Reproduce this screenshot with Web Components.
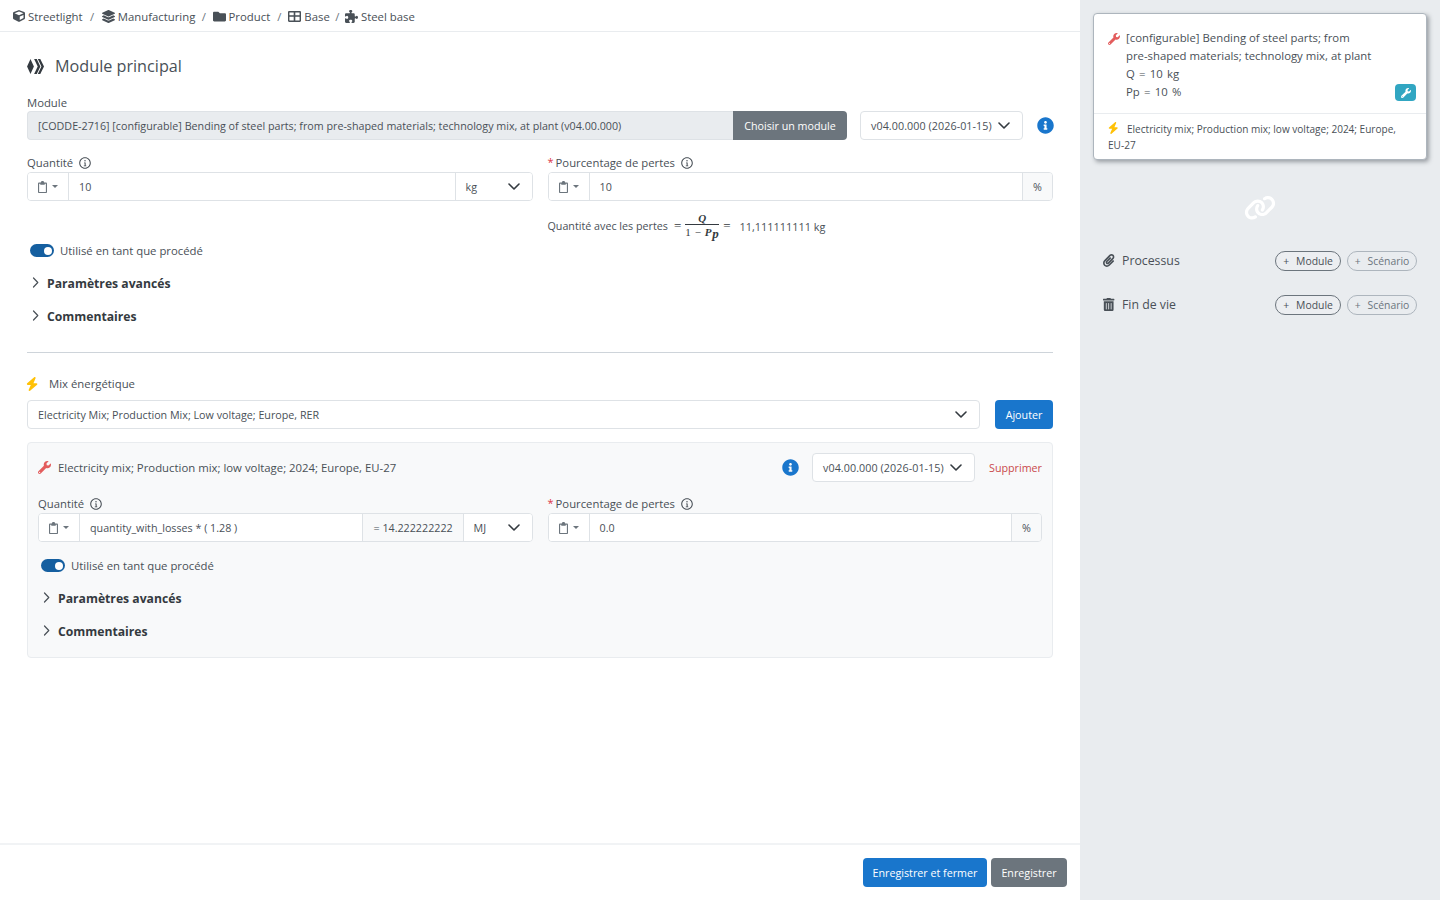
<!DOCTYPE html>
<html lang="fr"><head><meta charset="utf-8"><title>Module principal</title>
<style>
html,body{margin:0;padding:0;height:100%;}
body{font-family:"Open Sans","Noto Sans",sans-serif;font-size:11px;color:#495057;overflow:hidden;background:#fff;}
</style></head><body>
<x-app></x-app>
<script>
const ICONS={
cube:[512,'M239.1 6.3l-208 78c-18.7 7-31.1 25-31.1 45v225.1c0 18.2 10.3 34.8 26.5 42.9l208 104c13.5 6.8 29.4 6.8 42.9 0l208-104c16.3-8.1 26.5-24.8 26.5-42.9V129.3c0-20-12.4-37.9-31.1-44.9l-208-78C262 2.2 250 2.2 239.1 6.3zM256 68.4l192 72v1.1l-192 78-192-78v-1.1l192-72zm32 356V275.5l160-65v133.9l-160 80z'],
layers:[512,'M12.41 148.02l232.94 105.67c6.8 3.09 14.49 3.09 21.29 0l232.94-105.67c16.55-7.51 16.55-32.52 0-40.03L266.65 2.31a25.607 25.607 0 0 0-21.29 0L12.41 107.98c-16.55 7.51-16.55 32.53 0 40.04zm487.18 88.28l-58.09-26.33-161.64 73.27c-7.56 3.43-15.59 5.17-23.86 5.17s-16.29-1.74-23.86-5.17L70.51 209.97l-58.1 26.33c-16.55 7.5-16.55 32.5 0 40l232.94 105.59c6.8 3.08 14.49 3.08 21.29 0L499.59 276.3c16.55-7.5 16.55-32.5 0-40zm0 127.8l-57.87-26.23-161.86 73.37c-7.56 3.43-15.59 5.17-23.86 5.17s-16.29-1.74-23.86-5.17L70.29 337.87 12.41 364.1c-16.55 7.5-16.55 32.5 0 40l232.94 105.59c6.8 3.08 14.49 3.08 21.29 0L499.59 404.1c16.55-7.5 16.55-32.5 0-40z'],
folder:[512,'M464 128H272l-64-64H48C21.49 64 0 85.49 0 112v288c0 26.51 21.49 48 48 48h416c26.51 0 48-21.49 48-48V176c0-26.51-21.49-48-48-48z'],
table:[512,'M48 40h416c26 0 48 22 48 48v336c0 26-22 48-48 48H48c-26 0-48-22-48-48V88c0-26 22-48 48-48zM56 96v112h168V96zm232 0v112h168V96zM56 264v152h168V264zm232 0v152h168V264z'],
puzzle:[512,'M192 104.800c0-9.200-5.800-17.300-13.200-22.800C167.200 73.300 160 61.300 160 48c0-26.500 28.700-48 64-48s64 21.500 64 48c0 13.300-7.200 25.300-18.800 34c-7.400 5.500-13.200 13.600-13.200 22.800c0 12.800 10.400 23.200 23.200 23.200H336c26.500 0 48 21.500 48 48v56.800c0 12.800 10.400 23.200 23.200 23.200c9.200 0 17.300-5.800 22.800-13.200c8.700-11.600 20.700-18.800 34-18.800c26.500 0 48 28.700 48 64s-21.500 64-48 64c-13.300 0-25.300-7.200-34-18.800c-5.500-7.400-13.600-13.200-22.800-13.200c-12.800 0-23.200 10.400-23.200 23.200V464c0 26.500-21.500 48-48 48H279.200c-12.800 0-23.200-10.400-23.200-23.200c0-9.200 5.800-17.300 13.200-22.800c11.600-8.700 18.800-20.700 18.800-34c0-26.500-28.700-48-64-48s-64 21.500-64 48c0 13.300 7.200 25.300 18.800 34c7.400 5.500 13.200 13.600 13.200 22.800c0 12.800-10.400 23.200-23.200 23.200H48c-26.500 0-48-21.500-48-48V343.200C0 330.400 10.400 320 23.200 320c9.200 0 17.300 5.800 22.800 13.200C54.700 344.800 66.700 352 80 352c26.500 0 48-28.700 48-64s-21.500-64-48-64c-13.300 0-25.300 7.200-34 18.800C40.500 250.200 32.400 256 23.200 256C10.400 256 0 245.600 0 232.800V176c0-26.500 21.500-48 48-48H168.800c12.800 0 23.200-10.400 23.200-23.200z'],
wrench:[512,'M507.73 109.1c-2.24-9.03-13.54-12.09-20.12-5.51l-74.36 74.36-67.88-11.31-11.31-67.88 74.36-74.36c6.62-6.62 3.43-17.9-5.66-20.16-47.38-11.74-99.55.91-136.58 37.93-39.64 39.64-50.55 97.1-34.05 147.2L18.74 402.76c-24.99 24.99-24.99 65.51 0 90.5 24.99 24.99 65.51 24.99 90.5 0l213.21-213.21c50.12 16.71 107.47 5.68 147.37-34.22 37.07-37.07 49.7-89.32 37.91-136.73zM64 472c-13.25 0-24-10.75-24-24 0-13.26 10.75-24 24-24s24 10.74 24 24c0 13.25-10.75 24-24 24z'],
bolt:[448,'M349.4 44.6c5.9-13.7 1.5-29.7-10.6-38.5s-28.6-8-39.9 1.8l-256 224c-10 8.8-13.6 22.9-8.9 35.3S50.7 288 64 288H175.5L98.6 467.4c-5.9 13.7-1.5 29.7 10.6 38.5s28.6 8 39.9-1.8l256-224c10-8.8 13.5-22.9 8.9-35.3s-16.6-20.7-30-20.7H272.5L349.4 44.6z'],
link:[640,'M579.8 267.7c56.5-56.5 56.5-148 0-204.5c-50-50-128.8-56.5-186.3-15.4l-1.6 1.1c-14.4 10.3-17.7 30.3-7.4 44.6s30.3 17.7 44.6 7.4l1.6-1.1c32.1-22.9 76-19.3 103.8 8.6c31.5 31.5 31.5 82.5 0 114L422.3 334.8c-31.5 31.5-82.5 31.5-114 0c-27.9-27.9-31.5-71.8-8.6-103.8l1.1-1.6c10.3-14.4 6.9-34.4-7.4-44.6s-34.4-6.9-44.6 7.4l-1.1 1.6C206.5 251.2 213 330 263 380c56.5 56.5 148 56.5 204.5 0L579.8 267.7zM60.2 244.3c-56.5 56.5-56.5 148 0 204.5c50 50 128.8 56.5 186.3 15.4l1.6-1.1c14.4-10.3 17.7-30.3 7.4-44.6s-30.3-17.7-44.6-7.4l-1.6 1.1c-32.1 22.9-76 19.3-103.8-8.6C74 372 74 321 105.500 289.500L217.700 177.200c31.500-31.500 82.500-31.500 114 0c27.900 27.900 31.500 71.800 8.600 103.900l-1.100 1.600c-10.300 14.400-6.900 34.400 7.400 44.600s34.400 6.900 44.600-7.400l1.100-1.600C433.500 260.800 427 182 377 132c-56.500-56.500-148-56.500-204.500 0L60.200 244.300z'],
paperclip:[448,'M43.246 466.142c-58.43-60.289-57.341-157.511 1.386-217.581L254.392 34c44.316-45.332 116.351-45.336 160.671 0 43.89 44.894 43.943 117.329 0 162.276L232.214 383.128c-29.855 30.537-78.633 30.111-107.982-.998-28.275-29.97-27.368-77.473 1.452-106.953l143.743-146.835c6.182-6.314 16.312-6.422 22.626-.241l22.861 22.379c6.315 6.182 6.422 16.312.241 22.626L171.427 319.927c-4.932 5.045-5.236 13.428-.648 18.292 4.372 4.634 11.245 4.711 15.688.165l182.849-186.851c19.613-20.05 19.613-52.727-.011-72.798-19.189-19.627-49.957-19.637-69.154 0L90.39 293.295c-34.763 35.56-35.299 93.12-1.191 128.313 34.01 35.093 88.985 35.137 123.058.286l172.06-175.999c6.177-6.319 16.307-6.433 22.626-.256l22.877 22.364c6.319 6.177 6.434 16.307.256 22.626l-172.06 175.998c-59.576 60.938-155.943 60.216-214.77-.485z'],
trash:[448,'M32 464a48 48 0 0 0 48 48h288a48 48 0 0 0 48-48V128H32zm272-256a16 16 0 0 1 32 0v224a16 16 0 0 1-32 0zm-96 0a16 16 0 0 1 32 0v224a16 16 0 0 1-32 0zm-96 0a16 16 0 0 1 32 0v224a16 16 0 0 1-32 0zM432 32H312l-9.4-18.7A24 24 0 0 0 281.1 0H166.8a23.72 23.72 0 0 0-21.4 13.3L136 32H16A16 16 0 0 0 0 48v32a16 16 0 0 0 16 16h416a16 16 0 0 0 16-16V48a16 16 0 0 0-16-16z'],
info:[512,'M256 8C119.043 8 8 119.083 8 256c0 136.997 111.043 248 248 248s248-111.003 248-248C504 119.083 392.957 8 256 8zm0 110c23.196 0 42 18.804 42 42s-18.804 42-42 42-42-18.804-42-42 18.804-42 42-42zm56 254c0 6.627-5.373 12-12 12h-88c-6.627 0-12-5.373-12-12v-24c0-6.627 5.373-12 12-12h12v-64h-12c-6.627 0-12-5.373-12-12v-24c0-6.627 5.373-12 12-12h64c6.627 0 12 5.373 12 12v100h12c6.627 0 12 5.373 12 12v24z'],
infoline:[512,'M256 8C119 8 8 119 8 256s111 248 248 248 248-111 248-248S393 8 256 8zm0 450c-111.600 0-202-90.400-202-202S144.400 54 256 54s202 90.400 202 202-90.400 202-202 202zM256 126a32 32 0 1 1 0 64 32 32 0 0 1 0-64zM214 230h70v130h26v34H204v-34h36v-96h-26z'],
clip:[384,'M120 64h-72C21.500 64 0 85.500 0 112v352c0 26.500 21.500 48 48 48h288c26.500 0 48-21.500 48-48V112c0-26.500-21.500-48-48-48h-72C264 28.700 235.300 0 192 0s-72 28.700-72 64zM48 112h48v24c0 13.300 10.700 24 24 24h144c13.300 0 24-10.700 24-24v-24h48v352H48z'],
module:[512,'M105 30 L208 256 L105 482 L2 256Z M214 30 h80 l108 226 -108 226 h-80 l108-226z M326 30 h74 l112 226 -112 226 h-74 l108-226z']
};
function def(name,render){
  customElements.define(name,class extends HTMLElement{
    connectedCallback(){
      if(this.shadowRoot)return;
      this.attachShadow({mode:'open'}).innerHTML=render(this);
    }
  });
}
const a=(el,n,d='')=>el.getAttribute(n)??d;
const CHEV='<svg width="12" height="7" viewBox="0 0 12 7" style="flex:none"><path d="M1 1l5 5 5-5" fill="none" stroke="#343a40" stroke-width="1.6" stroke-linecap="round" stroke-linejoin="round"/></svg>';

def('x-icon',el=>{
  const [vb,d]=ICONS[a(el,'name')];const h=+a(el,'size',12);const sw=Math.round(h*vb/512*100)/100;const w=+a(el,'width',sw);
  return `<style>:host{display:inline-flex;flex:none;align-items:center;justify-content:center;color:${a(el,'color','currentColor')};width:${w}px;height:${h}px}svg{display:block;flex:none}</style>
  <svg width="${sw}" height="${h}" viewBox="0 0 ${vb} 512"><path fill="currentColor" fill-rule="evenodd" d="${d}"/></svg>`;
});

def('x-crumb',el=>`<style>:host{display:inline-flex;align-items:center;gap:3px;white-space:nowrap}</style><slot></slot>`);

def('x-breadcrumb',el=>`<style>:host{display:flex;align-items:center;height:30px;padding-top:1px;border-bottom:1px solid #e9ecef;padding-left:13px;font-size:11.35px;color:#495057;flex:none}</style><slot></slot>`);

def('x-title',el=>`<style>:host{display:flex;align-items:center;height:28px;margin-top:20px;gap:11px;font-size:16.2px;color:#495057}</style><slot></slot>`);

def('x-field',el=>{
  const req=el.hasAttribute('required'),info=el.hasAttribute('info');
  return `<style>:host{display:block;min-width:0}
  .l{display:flex;align-items:center;height:${a(el,'lh','18')}px;box-sizing:border-box;padding-bottom:${el.hasAttribute('lh')?0:1}px;font-size:11.3px;color:#495057;white-space:nowrap}
  .r{color:#dc3545;margin-right:2px;font-size:11px;position:relative;top:-1px}
  x-icon{margin-left:6px;color:#495057}</style>
  <div class="l">${req?'<span class="r">*</span>':''}<span>${a(el,'label')}</span>${info?'<x-icon name="infoline" size="12"></x-icon>':''}</div><slot></slot>`;
});

def('x-group',el=>{
  const val=a(el,'value'),res=a(el,'result'),unit=a(el,'unit'),sel=el.hasAttribute('unit-select');
  return `<style>:host{display:flex;height:29px;box-sizing:border-box;border:1px solid #dee2e6;border-radius:4px;background:#fff;align-items:stretch;font-size:var(--fs,11px);color:#495057;overflow:hidden}
  .c{flex:none;width:41px;background:#fff;border-right:1px solid #dee2e6;display:flex;align-items:center;padding-left:10px;box-sizing:border-box;gap:5px;color:#6c757d}
  .v{flex:1;display:flex;align-items:center;padding-left:10px;min-width:0;white-space:nowrap}
  .res{flex:none;width:101px;box-sizing:border-box;padding-left:11px;background:#f8f9fa;border-left:1px solid #dee2e6;display:flex;align-items:center;white-space:nowrap}
  .u{flex:none;display:flex;align-items:center;border-left:1px solid #dee2e6;box-sizing:border-box;white-space:nowrap}
  .u.st{width:30px;justify-content:center;background:#f8f9fa}
  .u.s{width:${a(el,'uw','77')}px;padding:0 12px 0 10px;justify-content:space-between;background:#fff}
  .car{width:0;height:0;border:3px solid transparent;border-top:3px solid #6c757d;border-bottom:0}</style>
  <div class="c"><x-icon name="clip" size="12" width="9"></x-icon><span class="car"></span></div>
  <div class="v">${val}</div>
  ${res?`<div class="res">${res}</div>`:''}
  ${unit?`<div class="u ${sel?'s':'st'}"><span>${unit}</span>${sel?CHEV:''}</div>`:''}`;
});

def('x-select',el=>`<style>:host{display:flex;flex:${el.hasAttribute('grow')?'1':'none'};height:29px;box-sizing:border-box;border:1px solid #dee2e6;border-radius:4px;background:#fff;align-items:center;justify-content:space-between;padding:0 12px 0 10px;font-size:var(--fs,11px);letter-spacing:${a(el,'ls','0')};color:#495057;white-space:nowrap;width:${a(el,'w','auto')}}</style><span><slot></slot></span>${CHEV}`);

def('x-button',el=>{const v=a(el,'variant','primary');
  return `<style>:host{display:inline-flex;flex:none;align-items:center;justify-content:center;height:29px;box-sizing:border-box;padding:0 6px;color:#fff;font-size:var(--fs,11px);white-space:nowrap;border-radius:${a(el,'radius','4px')};background:${v==='primary'?'#1976cc':'#6c757d'};width:${a(el,'w','auto')}}</style><slot></slot>`});

def('x-module-input',el=>`<style>:host{display:flex;flex:1;min-width:0;height:29px}
 .t{flex:1;min-width:0;box-sizing:border-box;background:#e9ecef;border:1px solid #dee2e6;border-right:0;border-radius:4px 0 0 4px;display:flex;align-items:center;padding-left:10px;font-size:var(--fs,11px);color:#495057;white-space:nowrap;overflow:hidden}</style>
 <div class="t"><slot></slot></div><x-button variant="secondary" radius="0 4px 4px 0" w="114px">${a(el,'action')}</x-button>`);

def('x-info',el=>`<style>:host{display:inline-flex;flex:none;color:#1976cc}</style><x-icon name="info" size="17" width="16"></x-icon>`);

def('x-toggle',el=>`<style>:host{display:flex;align-items:center;height:19px;gap:6px;padding-left:3px;font-size:11.35px;color:#495057;white-space:nowrap}
 .sw{width:24px;height:13px;border-radius:7px;background:#155fa0;display:flex;align-items:center;justify-content:flex-end;padding-right:2px;box-sizing:border-box}
 .k{width:8px;height:8px;border-radius:50%;background:#fff}</style><span class="sw"><span class="k"></span></span><slot></slot>`);

def('x-collapse',el=>`<style>:host{display:flex;align-items:center;height:33px;font-size:12.2px;font-weight:700;color:#343a40;white-space:nowrap}
 svg{margin:0 8px 0 5px;flex:none;position:relative;top:-1px}</style><svg width="7" height="11" viewBox="0 0 7 11"><path d="M1.500 1l4.300 4.500-4.300 4.500" fill="none" stroke="#495057" stroke-width="1.200" stroke-linecap="round" stroke-linejoin="round"/></svg><slot></slot>`);

def('x-fraction',el=>`<style>:host{display:inline-flex;flex-direction:column;align-items:center;font-family:"Liberation Serif",serif;color:#343a40;font-size:11px;line-height:12px;margin:0 4px;width:34px}
 .n{border-bottom:1px solid #343a40;width:100%;text-align:center;box-sizing:border-box;height:13px;font-style:italic;font-weight:700}
 .d{white-space:nowrap;height:14px;letter-spacing:.6px;padding-top:1px} i{font-weight:700}.s{font-size:13px;position:relative;top:2px}</style>
 <div class="n">Q</div><div class="d">1 − <i>P<span class="s">p</span></i></div>`);

def('x-card-panel',el=>`<style>:host{display:block;margin-top:13px;background:#f8f9fa;border:1px solid #e9ecef;border-radius:4px;padding:10px 10px 9px}</style><slot></slot>`);

def('x-pill',el=>{const l=el.hasAttribute('light');return `<style>:host{display:inline-flex;align-items:center;justify-content:center;gap:7px;height:20px;box-sizing:border-box;border:1px solid ${l?'#adb5bd':'#6c757d'};border-radius:10px;font-size:10.4px;color:${l?'#6c757d':'#495057'};width:${a(el,'w')};background:${l?'transparent':'#eceef1'}}</style><span>+</span><slot></slot>`});

def('x-side-row',el=>`<style>:host{display:flex;align-items:center;height:20px;padding:0 10px;color:#495057;font-size:12.3px}
 .i{width:19px;display:flex}.a{margin-left:auto;display:flex;gap:6px}</style>
 <span class="i"><x-icon name="${a(el,'icon')}" size="13" width="12"></x-icon></span><span>${a(el,'label')}</span><span class="a"><x-pill w="66px">Module</x-pill><x-pill light w="70px">Scénario</x-pill></span>`);

def('x-flow-card',el=>`<style>:host{display:block;background:#fff;border:1px solid #adb5bd;border-radius:4px;box-shadow:2px 2px 4px rgba(73,80,87,.5)}
 .top{display:flex;padding:15px 10px 12px 14px;border-bottom:1px solid #e9ecef;font-size:11.35px;line-height:18px;color:#495057}
 .top .ic{width:18px;flex:none;padding-top:3px}
 .main{flex:1}.bt{display:flex;justify-content:space-between;align-items:flex-end}
 .ws{word-spacing:1.300px}
 .nw{white-space:nowrap}
 .badge{display:flex;align-items:center;justify-content:center;width:21px;height:17px;border-radius:4px;background:#31a6c2;color:#fff}
 .bot{padding:7px 10px 6px 14px;font-size:10.05px;line-height:16px;color:#495057}
 .bot x-icon{margin-right:8px;vertical-align:-1px}</style>
 <div class="top"><span class="ic"><x-icon name="wrench" size="12" color="#e35d5d"></x-icon></span><div class="main">
 [configurable] Bending of steel parts; from<br>pre-shaped materials; technology mix, at plant<br><span class="ws">Q = 10 kg</span>
 <div class="bt"><span class="ws">Pp = 10 %</span><span class="badge"><x-icon name="wrench" size="10"></x-icon></span></div></div></div>
 <div class="bot"><x-icon name="bolt" size="12" width="11" color="#ffc107"></x-icon>Electricity mix; Production mix; low voltage; 2024; Europe, <span class="nw">EU-27</span></div>`);

def('x-sidebar',el=>`<style>:host{display:block;background:#e9ecef;padding:13px 13px 0;box-sizing:border-box;height:900px}
 .lk{display:flex;justify-content:center;margin:35px 0 30px;color:#fff}
 x-side-row+x-side-row{margin-top:24px}</style>
 <x-flow-card></x-flow-card><div class="lk"><x-icon name="link" size="25.6"></x-icon></div>
 <x-side-row icon="paperclip" label="Processus"></x-side-row><x-side-row icon="trash" label="Fin de vie"></x-side-row>`);

def('x-quantity-block',el=>`<style>:host{display:block}
 .g{display:grid;grid-template-columns:1fr 1fr;column-gap:15px}</style><div class="g"><slot></slot></div>`);

def('x-app',el=>`<style>:host{display:grid;grid-template-columns:1080px 360px;height:900px;--fs:10.72px}
 .main{display:flex;flex-direction:column;height:900px;min-width:0}
 .content{flex:1;padding:0 27px;min-height:0}
 .footer{flex:none;border-top:2px solid #f1f3f5;display:flex;justify-content:flex-end;gap:4px;padding:13px 13px 0 0;box-sizing:border-box;height:57px}
 .row{display:flex;align-items:center}
 .sep{margin:0 6.500px;color:#6c757d}
 .mod{gap:13px;}
 .mod x-info{margin-left:1px}
 .calc{display:flex;align-items:center;height:28px;margin-top:11px;margin-left:520.5px;font-size:var(--fs);color:#495057;white-space:nowrap}
 .eq{font-size:13px;font-family:"Liberation Serif",serif;color:#343a40}
 .mt14{margin-top:14px}
 hr{border:0;border-top:1px solid #ced4da;margin:19px 0 0;height:0}
 .mix{display:flex;align-items:center;height:18px;margin-top:22px;margin-bottom:7px;font-size:11.35px;gap:11px}
 .mix span{position:relative;top:-1px}
 .hd{display:flex;align-items:center;gap:7px;font-size:11.36px;white-space:nowrap}
 .hd .sp{flex:1}
 .del{color:#c94a4a;font-size:var(--fs);margin-left:7px}
 .ch{height:29px}
 </style>
 <div class="main">
  <x-breadcrumb>
   <x-crumb><x-icon name="cube" size="12"></x-icon>Streetlight</x-crumb><span class="sep" style="margin:0 7.500px">/</span>
   <x-crumb><x-icon name="layers" size="13"></x-icon>Manufacturing</x-crumb><span class="sep">/</span>
   <x-crumb><x-icon name="folder" size="13"></x-icon>Product</x-crumb><span class="sep" style="margin:0 7px">/</span>
   <x-crumb><x-icon name="table" size="13"></x-icon>Base</x-crumb><span class="sep" style="margin:0 5.500px">/</span>
   <x-crumb><x-icon name="puzzle" size="13"></x-icon>Steel base</x-crumb>
  </x-breadcrumb>
  <div class="content">
   <x-title><x-icon name="module" size="17" color="#343a40"></x-icon><span>Module principal</span></x-title>
   <x-field label="Module" lh="17" class="mt14">
    <div class="row mod"><x-module-input action="Choisir un module">[CODDE-2716] [configurable] Bending of steel parts; from pre-shaped materials; technology mix, at plant (v04.00.000)</x-module-input>
    <x-select w="163px" ls=".08px">v04.00.000 (2026-01-15)</x-select><x-info></x-info></div>
   </x-field>
   <x-quantity-block class="mt14">
    <x-field label="Quantité" info><x-group value="10" unit="kg" unit-select></x-group></x-field>
    <x-field label="Pourcentage de pertes" required info><x-group value="10" unit="%"></x-group></x-field>
   </x-quantity-block>
   <div class="calc"><span>Quantité avec les pertes</span><span class="eq" style="margin-left:6px">=</span><x-fraction></x-fraction><span class="eq">=</span><span style="margin-left:9px;font-size:10.9px">11,111111111 kg</span></div>
   <x-toggle style="margin-top:1px">Utilisé en tant que procédé</x-toggle>
   <x-collapse style="margin-top:7px">Paramètres avancés</x-collapse>
   <x-collapse>Commentaires</x-collapse>
   <hr>
   <div class="mix"><x-icon name="bolt" size="14" width="11" color="#ffc107"></x-icon><span>Mix énergétique</span></div>
   <div class="row" style="gap:15px"><x-select grow>Electricity Mix; Production Mix; Low voltage; Europe, RER</x-select><x-button w="58px">Ajouter</x-button></div>
   <x-card-panel>
    <div class="hd ch"><x-icon name="wrench" size="13" color="#e35d5d"></x-icon><span>Electricity mix; Production mix; low voltage; 2024; Europe, EU-27</span><span class="sp"></span><x-info></x-info><x-select w="163px" ls=".08px" style="margin-left:7px">v04.00.000 (2026-01-15)</x-select><span class="del">Supprimer</span></div>
    <x-quantity-block style="margin-top:13px">
     <x-field label="Quantité" info><x-group value="quantity_with_losses * ( 1.28 )" result="= 14.222222222" unit="MJ" unit-select uw="69"></x-group></x-field>
     <x-field label="Pourcentage de pertes" required info><x-group value="0.0" unit="%"></x-group></x-field>
    </x-quantity-block>
    <x-toggle style="margin-top:14px">Utilisé en tant que procédé</x-toggle>
    <x-collapse style="margin-top:7px">Paramètres avancés</x-collapse>
    <x-collapse>Commentaires</x-collapse>
   </x-card-panel>
  </div>
  <div class="footer"><x-button w="124px">Enregistrer et fermer</x-button><x-button variant="secondary" w="76px">Enregistrer</x-button></div>
 </div>
 <x-sidebar></x-sidebar>`);
</script>
</body></html>
